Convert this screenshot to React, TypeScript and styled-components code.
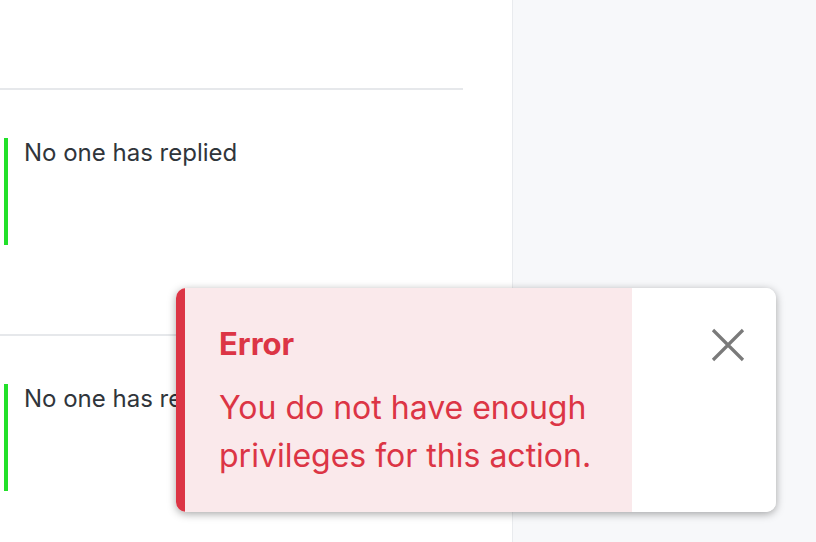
import styled, { createGlobalStyle } from "styled-components";

const Global = createGlobalStyle`
  html, body {
    margin: 0;
    padding: 0;
    height: 100%;
  }

  body {
    font-family: Inter, "Noto Sans", sans-serif;
    background: #f8f9fa;
  }

  #root {
    height: 100%;
  }
`;

const Page = styled.div`
  display: flex;
  height: 100vh;
  overflow: hidden;
`;

const Main = styled.main`
  width: 512px;
  flex-shrink: 0;
  background: #fff;
  border-right: 1px solid #e9ebee;
`;

const Aside = styled.aside`
  flex: 1;
  background: #f7f8fa;
`;

const Top = styled.div`
  height: 88px;
  margin-right: 49px;
  border-bottom: 2px solid #e6e8eb;
`;

const Item = styled.section`
  margin-right: 49px;
  padding: 48px 0 89px;
  border-bottom: 2px solid #e6e8eb;
`;

const Quote = styled.div`
  margin-left: 4px;
  padding-left: 16px;
  height: 107px;
  border-left: 4px solid #22e02a;
  font-size: 24px;
  line-height: 30px;
  color: #30353b;
`;

const Toast = styled.div`
  position: fixed;
  left: 176px;
  top: 288px;
  width: 600px;
  height: 224px;
  display: flex;
  border-radius: 10px;
  overflow: hidden;
  background: #fff;
  box-shadow: 0 2px 8px rgba(0, 0, 0, 0.35);
`;

const Body = styled.div`
  flex: 1;
  background: #fae9eb;
  border-left: 9px solid #dc3545;
  padding: 37px 20px 0 34px;
  color: #dc3545;
`;

const Title = styled.div`
  font-size: 31px;
  line-height: 38px;
  font-weight: 700;
`;

const Message = styled.div`
  margin-top: 21px;
  font-size: 32px;
  line-height: 48px;
`;

const Close = styled.button`
  width: 144px;
  border: none;
  background: #fff;
  padding: 40px 31px 0 0;
  display: flex;
  justify-content: flex-end;
  align-items: flex-start;
  color: #7a7a7a;
  cursor: pointer;
`;

const items = ["No one has replied", "No one has replied"];

export default function App() {
  return (
    <>
      <Global />
      <Page>
        <Main>
          <Top />
          {items.map((text, i) => (
            <Item key={i}>
              <Quote>{text}</Quote>
            </Item>
          ))}
        </Main>
        <Aside />
      </Page>

      <Toast role="alert">
        <Body>
          <Title>Error</Title>
          <Message>
            You do not have enough
            <br />
            privileges for this action.
          </Message>
        </Body>
        <Close aria-label="Close">
          <svg width="34" height="34" viewBox="0 0 34 34">
            <path
              d="M2 2 L32 32 M32 2 L2 32"
              stroke="currentColor"
              strokeWidth="3.2"
              strokeLinecap="butt"
            />
          </svg>
        </Close>
      </Toast>
    </>
  );
}
